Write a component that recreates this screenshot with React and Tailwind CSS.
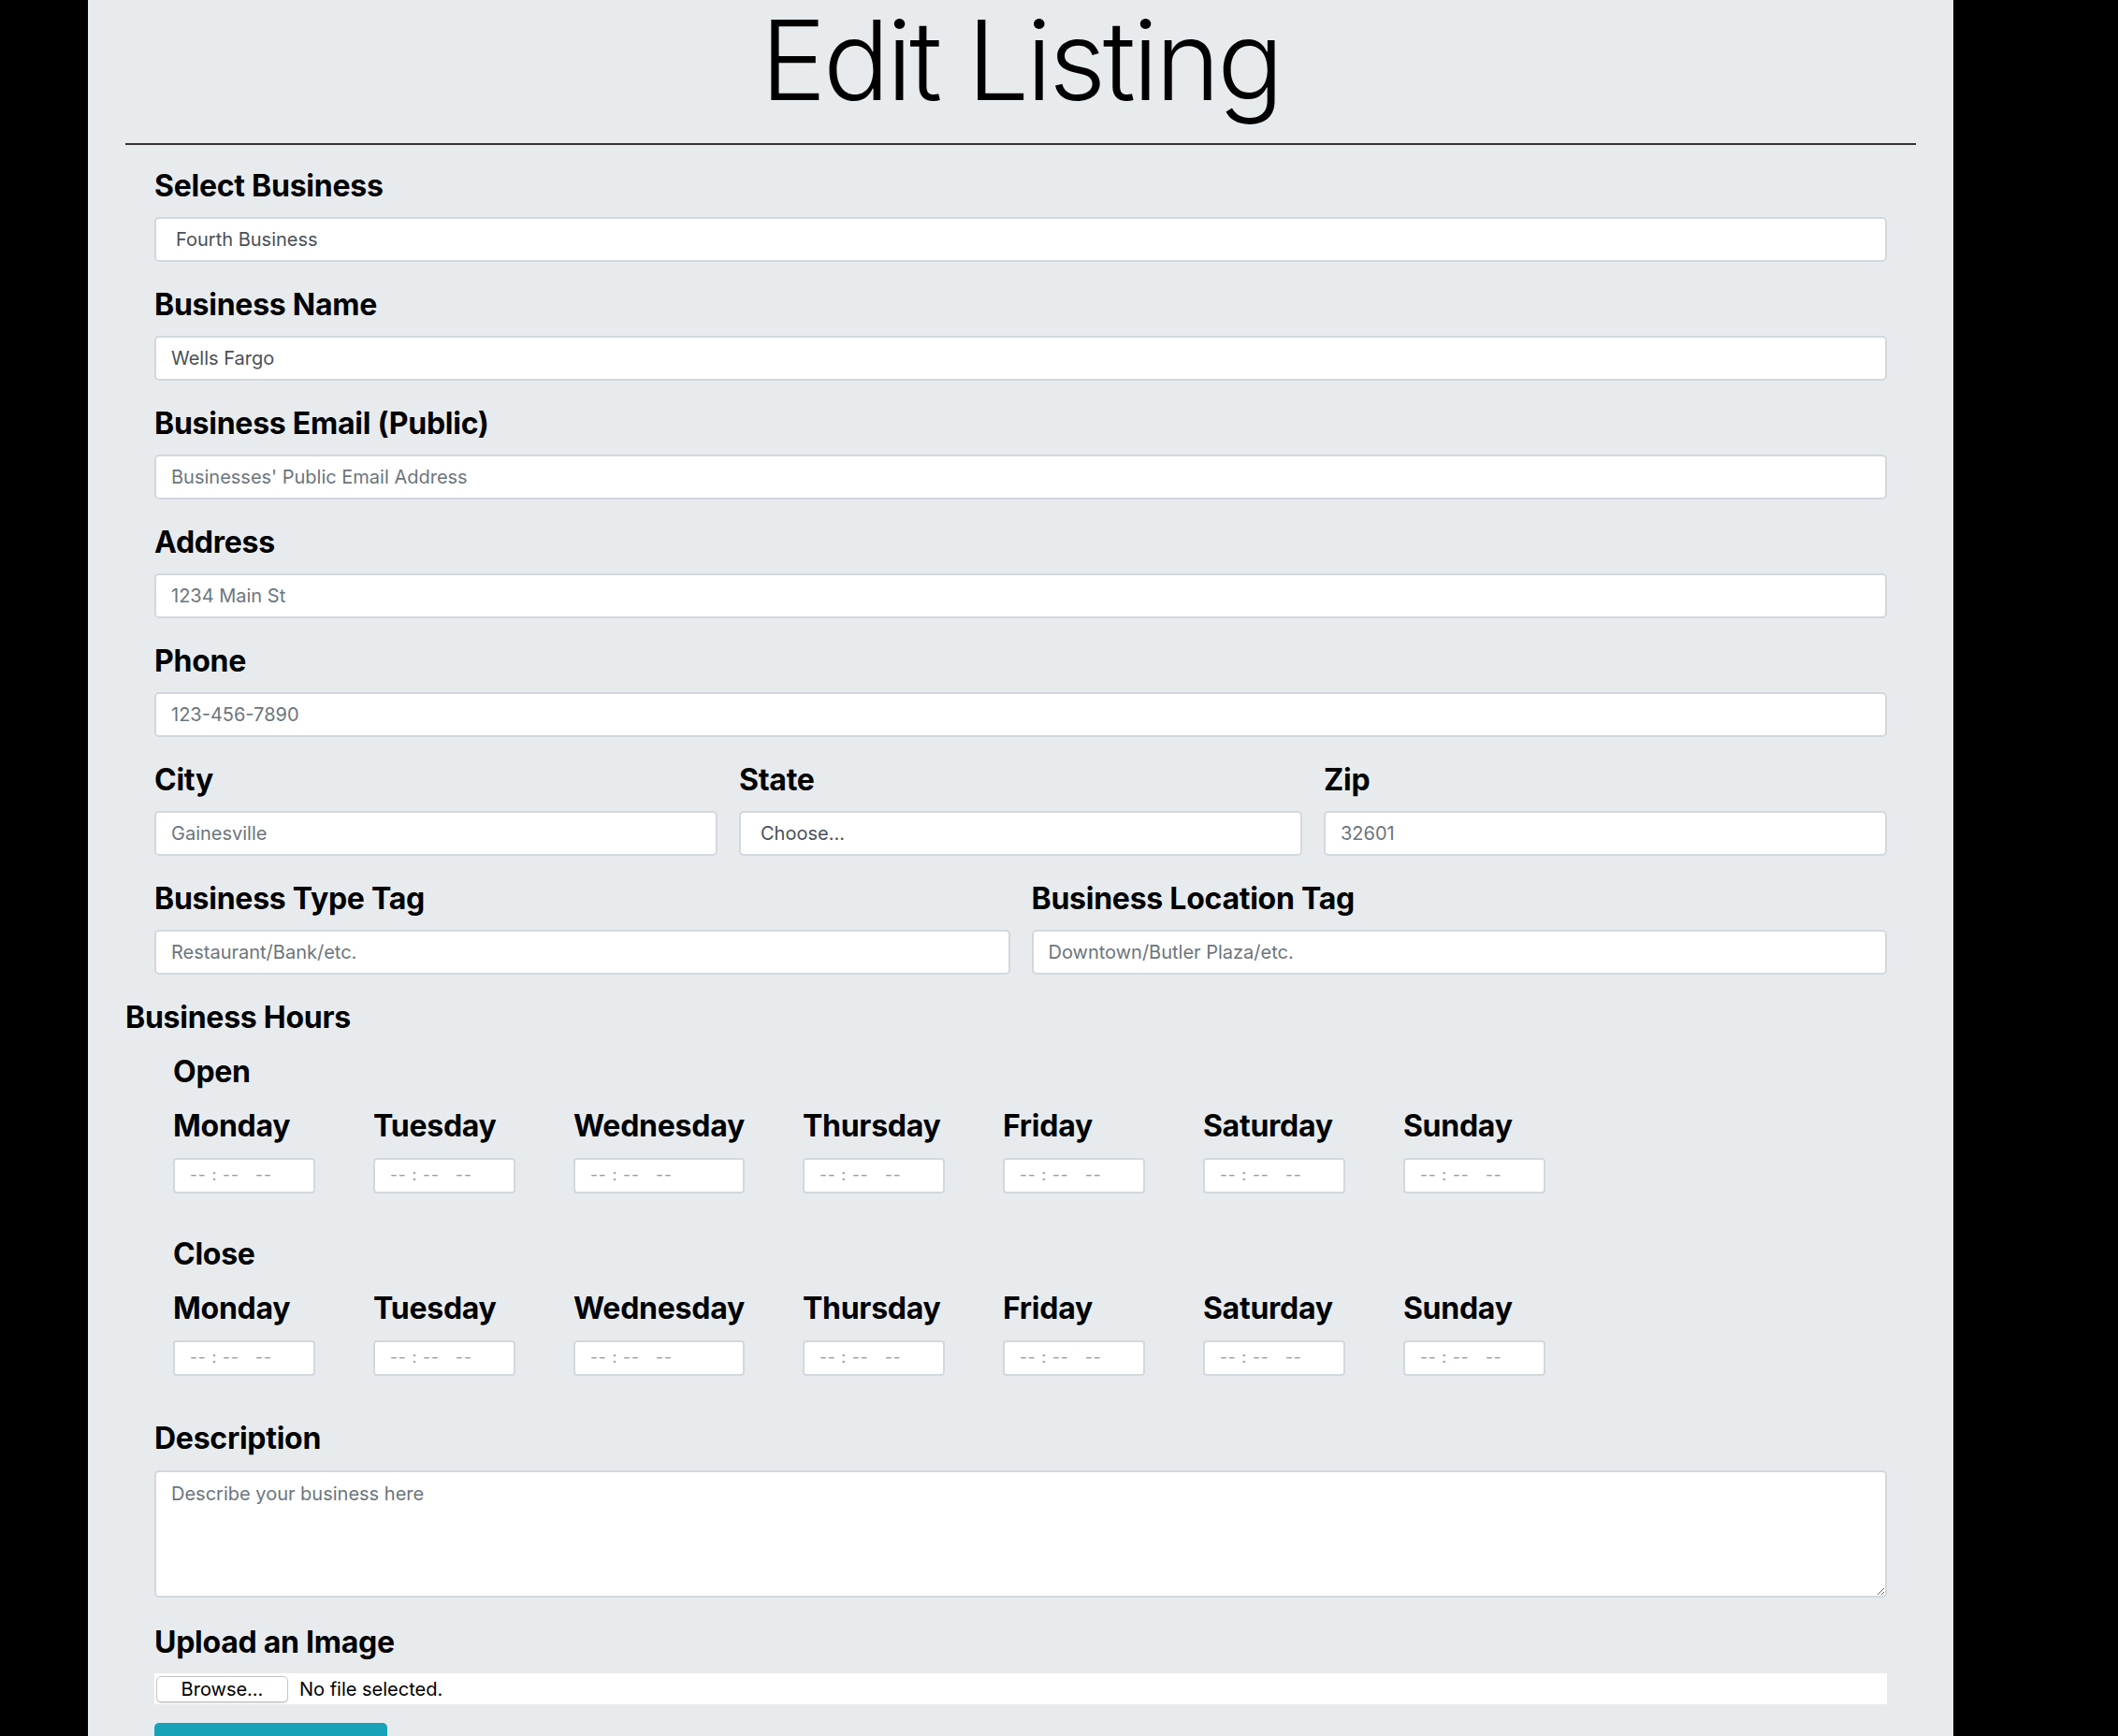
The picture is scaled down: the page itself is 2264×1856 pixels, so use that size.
import React from "react";

const days = ["Monday", "Tuesday", "Wednesday", "Thursday", "Friday", "Saturday", "Sunday"];

const inputCls =
  "block w-full h-[48px] rounded-[5px] border-2 border-[#d3d8de] bg-white px-[16px] text-[20px] text-[#495057] placeholder:text-[#6c757d] outline-none";

function Label({children, className = ""}) {
  return (
    <label className={"block text-[32px] leading-[38px] font-bold tracking-[-0.008em] text-black " + className}>
      {children}
    </label>
  );
}

function Group({label, children}) {
  return (
    <div className="mb-[27px]">
      <Label className="mb-[14px]">{label}</Label>
      {children}
    </div>
  );
}

function HoursRow({title, top}) {
  return (
    <div className={top}>
      <Label className="mb-[20px]">{title}</Label>
      <div className="flex gap-[62px]">
        {days.map((d) => (
          <div key={d} className="flex flex-col">
            <Label className="mb-[15px]">{d}</Label>
            <div className="flex h-[38px] w-full min-w-[152px] items-center rounded-[4px] border-2 border-[#d3d8de] bg-white pl-[16px] text-[17px] tracking-[1px] text-[#9c9c9c] whitespace-pre">
              {"-- : --   --"}
            </div>
          </div>
        ))}
      </div>
    </div>
  );
}

export default function App() {
  return (
    <div className="min-h-screen bg-black" style={{fontFamily: "Inter, 'Noto Sans', sans-serif"}}>
      <div className="ml-[94px] w-[1994px] min-h-screen bg-[#e8ebee] px-[40px]">
        {/* Header */}
        <h1 className="text-center text-[118px] leading-[128px] font-light tracking-[-0.028em] text-black">
          Edit Listing
        </h1>
        <hr className="mt-[25px] border-0 h-[2px] bg-[#333]" />

        <form className="pt-[25px]">
          <div className="px-[31px]">
            <Group label="Select Business">
              <select className={inputCls + " appearance-none px-[21px]"} defaultValue="4">
                <option value="4">Fourth Business</option>
              </select>
            </Group>
            <Group label="Business Name">
              <input className={inputCls} defaultValue="Wells Fargo" />
            </Group>
            <Group label="Business Email (Public)">
              <input className={inputCls} placeholder="Businesses' Public Email Address" />
            </Group>
            <Group label="Address">
              <input className={inputCls} placeholder="1234 Main St" />
            </Group>
            <Group label="Phone">
              <input className={inputCls} placeholder="123-456-7890" />
            </Group>
            <div className="grid grid-cols-3 gap-x-[23px]">
              <Group label="City">
                <input className={inputCls} placeholder="Gainesville" />
              </Group>
              <Group label="State">
                <select className={inputCls + " appearance-none px-[21px]"} defaultValue="">
                  <option value="">Choose...</option>
                </select>
              </Group>
              <Group label="Zip">
                <input className={inputCls} placeholder="32601" />
              </Group>
            </div>
            <div className="grid grid-cols-2 gap-x-[23px]">
              <Group label="Business Type Tag">
                <input className={inputCls} placeholder="Restaurant/Bank/etc." />
              </Group>
              <Group label="Business Location Tag">
                <input className={inputCls} placeholder="Downtown/Butler Plaza/etc." />
              </Group>
            </div>
          </div>

          {/* Business hours */}
          <Label className="mb-[20px]">Business Hours</Label>
          <div className="pl-[51px]">
            <HoursRow title="Open" top="" />
            <HoursRow title="Close" top="mt-[46px]" />
          </div>

          <div className="px-[31px] pt-[48px]">
            <div className="mb-[29px]">
              <Label className="mb-[15px]">Description</Label>
              <textarea
                className="block w-full h-[136px] rounded-[5px] border-2 border-[#d3d8de] bg-white px-[16px] py-[8px] text-[20px] text-[#495057] placeholder:text-[#6c757d] outline-none"
                placeholder="Describe your business here"
              />
            </div>
            <div className="mb-[20px]">
              <Label className="mb-[14px]">Upload an Image</Label>
              <div className="flex h-[33px] items-center bg-white pl-[2px]">
                <span className="flex h-[28px] w-[141px] items-center justify-center rounded-[5px] border border-[#c4c4c4] bg-white text-[20px] text-black shadow-[0_1px_1px_rgba(0,0,0,0.15)]">
                  Browse...
                </span>
                <span className="ml-[12px] text-[20px] text-black">No file selected.</span>
              </div>
            </div>
            <button
              type="button"
              className="w-[249px] rounded-[5px] bg-[#17a2b8] px-[16px] py-[14px] text-[20px] text-white"
            >
              Update Listing
            </button>
          </div>
        </form>
        <div className="h-[40px]" />
      </div>
    </div>
  );
}
